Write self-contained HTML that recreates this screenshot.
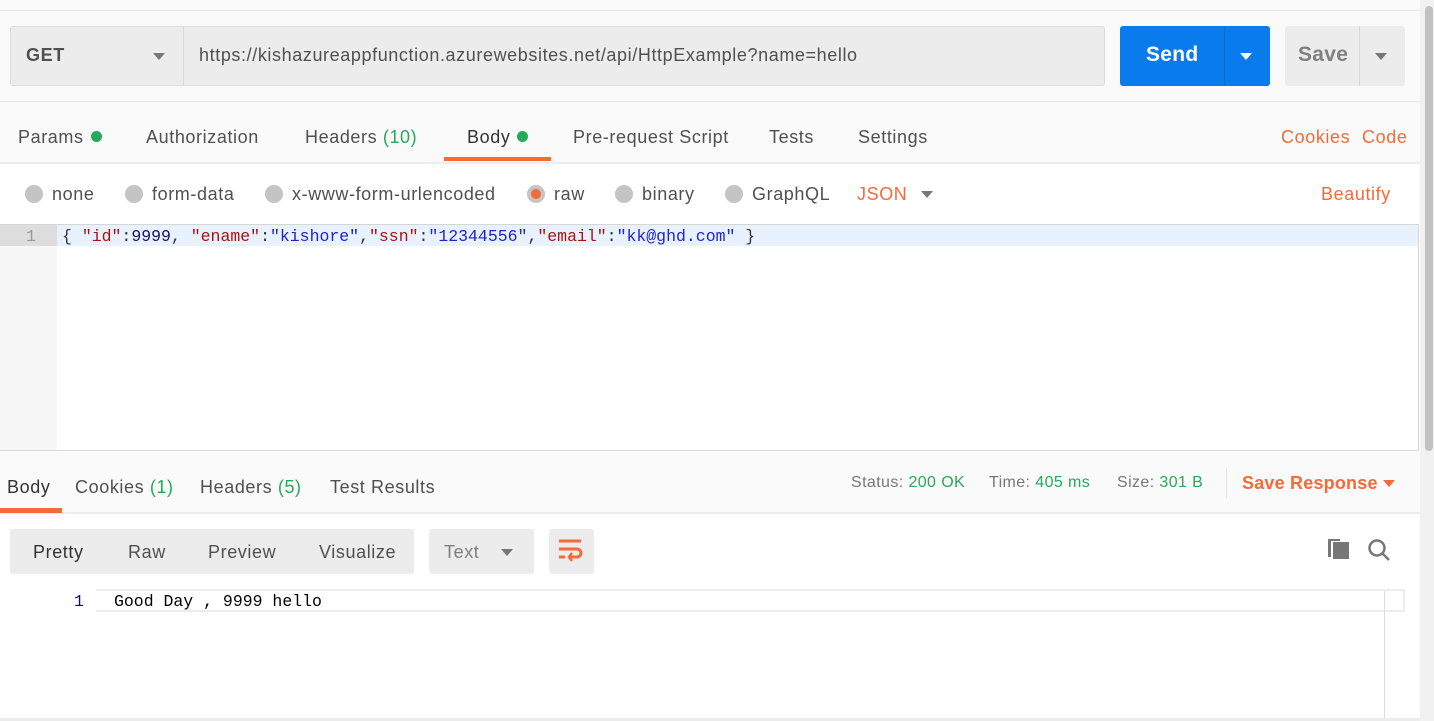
<!DOCTYPE html>
<html><head><meta charset="utf-8"><style>
*{margin:0;padding:0;box-sizing:border-box}
body{width:1434px;height:721px;overflow:hidden;background:#fff;font-family:"Liberation Sans",sans-serif;color:#505050;position:relative;font-size:18px;letter-spacing:0.6px}
.a{position:absolute;white-space:nowrap}
.g{color:#26a95b}
.o{color:#f26b3a}
.dot{display:inline-block;width:11px;height:11px;border-radius:50%;background:#26a95b;margin-left:7px;vertical-align:1px}
.rad{display:inline-block;width:18px;height:18px;border-radius:50%;background:#c4c4c4;vertical-align:-3px;margin-right:9px}
.mono{font-family:"Liberation Mono",monospace;font-size:16.5px;letter-spacing:0}
.tri{position:absolute;width:0;height:0;border-left:6px solid transparent;border-right:6px solid transparent;border-top:7px solid #777}
</style></head><body>
<div class="a" style="left:0;top:0;width:1420px;height:163px;background:#fafafa"></div>
<div class="a" style="left:0;top:10px;width:1420px;height:1px;background:#e8e8e8"></div>
<div class="a" style="left:0;top:101px;width:1420px;height:1px;background:#e8e8e8"></div>
<div class="a" style="left:0;top:162px;width:1420px;height:2px;background:#ececec"></div>
<div class="a" style="left:10px;top:26px;width:1095px;height:60px;background:#ececec;border:1px solid #dcdcdc;border-radius:3px"></div>
<div class="a" style="left:183px;top:27px;width:1px;height:58px;background:#d8d8d8"></div>
<div class="a" style="left:26px;top:45px;font-weight:bold;color:#505050">GET</div>
<div class="tri" style="left:153px;top:53px"></div>
<div class="a" style="left:199px;top:45px;color:#505050">https://kishazureappfunction.azurewebsites.net/api/HttpExample?name=hello</div>
<div class="a" style="left:1120px;top:26px;width:150px;height:60px;background:#097bed;border-radius:3px"></div>
<div class="a" style="left:1224px;top:26px;width:1px;height:60px;background:#0a6cd0"></div>
<div class="a" style="left:1146px;top:43px;color:#fff;font-weight:bold;font-size:21px;letter-spacing:0.3px">Send</div>
<div class="tri" style="left:1240px;top:53px;border-top-color:#fff"></div>
<div class="a" style="left:1285px;top:26px;width:120px;height:60px;background:#ececec;border-radius:3px"></div>
<div class="a" style="left:1359px;top:26px;width:1px;height:60px;background:#d8d8d8"></div>
<div class="a" style="left:1298px;top:43px;color:#808080;font-weight:bold;font-size:21px;letter-spacing:0.3px">Save</div>
<div class="tri" style="left:1375px;top:53px"></div>
<div class="a" style="left:18px;top:127px">Params<span class="dot"></span></div>
<div class="a" style="left:146px;top:127px">Authorization</div>
<div class="a" style="left:305px;top:127px">Headers <span class="g">(10)</span></div>
<div class="a" style="left:467px;top:127px;color:#333">Body<span class="dot"></span></div>
<div class="a" style="left:444px;top:157px;width:107px;height:4px;background:#f26b3a"></div>
<div class="a" style="left:573px;top:127px">Pre-request Script</div>
<div class="a" style="left:769px;top:127px">Tests</div>
<div class="a" style="left:858px;top:127px">Settings</div>
<div class="a o" style="left:1281px;top:127px">Cookies</div>
<div class="a o" style="left:1362px;top:127px">Code</div>
<div class="a" style="left:25px;top:184px"><span class="rad"></span>none</div>
<div class="a" style="left:125px;top:184px"><span class="rad"></span>form-data</div>
<div class="a" style="left:265px;top:184px"><span class="rad"></span>x-www-form-urlencoded</div>
<div class="a" style="left:527px;top:184px"><span class="rad" style="background:#f26b3a;border:4px solid #c4c4c4"></span>raw</div>
<div class="a" style="left:615px;top:184px"><span class="rad"></span>binary</div>
<div class="a" style="left:725px;top:184px"><span class="rad"></span>GraphQL</div>
<div class="a o" style="left:857px;top:184px">JSON</div>
<div class="tri" style="left:921px;top:191px"></div>
<div class="a o" style="left:1321px;top:184px">Beautify</div>
<div class="a" style="left:0;top:224px;width:1419px;height:227px;border:1px solid #d6d6d6;border-left:none;background:#fff"></div>
<div class="a" style="left:0;top:225px;width:57px;height:225px;background:#f7f7f7"></div>
<div class="a" style="left:0;top:225px;width:57px;height:21px;background:#ddd"></div>
<div class="a" style="left:57px;top:225px;width:1361px;height:21px;background:#e8f2fe"></div>
<div class="a mono" style="left:26px;top:227px;color:#999">1</div>
<div class="a mono" style="left:62px;top:227px;color:#333">{ <span style="color:#a11">"id"</span>:<span style="color:#116">9999</span>, <span style="color:#a11">"ename"</span>:<span style="color:#22c">"kishore"</span>,<span style="color:#a11">"ssn"</span>:<span style="color:#22c">"12344556"</span>,<span style="color:#a11">"email"</span>:<span style="color:#22c">"kk@ghd.com"</span> }</div>
<div class="a" style="left:0;top:452px;width:1420px;height:61px;background:#fafafa"></div>
<div class="a" style="left:0;top:512px;width:1420px;height:2px;background:#ececec"></div>
<div class="a" style="left:7px;top:477px;color:#333">Body</div>
<div class="a" style="left:0;top:508px;width:62px;height:5px;background:#f26b3a"></div>
<div class="a" style="left:75px;top:477px">Cookies <span class="g">(1)</span></div>
<div class="a" style="left:200px;top:477px">Headers <span class="g">(5)</span></div>
<div class="a" style="left:330px;top:477px">Test Results</div>
<div class="a" style="left:851px;top:474px;font-size:16px;color:#777;letter-spacing:0.4px">Status: <span class="g">200 OK</span></div>
<div class="a" style="left:989px;top:474px;font-size:16px;color:#777;letter-spacing:0.4px">Time: <span class="g">405 ms</span></div>
<div class="a" style="left:1117px;top:474px;font-size:16px;color:#777;letter-spacing:0.4px">Size: <span class="g">301 B</span></div>
<div class="a" style="left:1226px;top:468px;width:1px;height:30px;background:#e4e4e4"></div>
<div class="a o" style="left:1242px;top:473px;font-weight:bold;letter-spacing:0.2px">Save Response</div>
<div class="tri" style="left:1383px;top:480px;border-top-color:#f26b3a"></div>
<div class="a" style="left:10px;top:529px;width:404px;height:45px;background:#ececec;border-radius:3px"></div>
<div class="a" style="left:33px;top:542px;color:#333">Pretty</div>
<div class="a" style="left:128px;top:542px">Raw</div>
<div class="a" style="left:208px;top:542px">Preview</div>
<div class="a" style="left:319px;top:542px">Visualize</div>
<div class="a" style="left:429px;top:529px;width:105px;height:45px;background:#ececec;border-radius:3px"></div>
<div class="a" style="left:444px;top:542px;color:#808080">Text</div>
<div class="tri" style="left:501px;top:549px"></div>
<div class="a" style="left:549px;top:529px;width:45px;height:45px;background:#ececec;border-radius:3px"></div>
<svg class="a" style="left:557px;top:538px" width="28" height="28" viewBox="0 0 28 28" fill="none" stroke="#f26b3a" stroke-width="3"><path d="M2 3H24M2 11H20a4 4 0 0 1 0 8H13M2 19H8"/><path d="M15 15l-3 4 3 4" stroke-width="2.5"/></svg>
<svg class="a" style="left:1328px;top:538px" width="24" height="24" viewBox="0 0 24 24"><path d="M0 1h12v2H3v16H0z" fill="#777"/><rect x="5" y="4" width="16" height="17" fill="#777"/></svg>
<svg class="a" style="left:1366px;top:537px" width="26" height="26" viewBox="0 0 26 26" fill="none" stroke="#777" stroke-width="2.5"><circle cx="11" cy="11" r="7.5"/><path d="M16.5 16.5L23 23"/></svg>
<div class="a" style="left:96px;top:589px;width:1309px;height:23px;border:2px solid #ececec;border-left:none"></div>
<div class="a" style="left:1384px;top:591px;width:1px;height:130px;background:#ddd"></div>
<div class="a mono" style="left:74px;top:592px;color:#116">1</div>
<div class="a mono" style="left:114px;top:592px;color:#000">Good Day , 9999 hello</div>
<div class="a" style="left:0;top:718px;width:1420px;height:3px;background:#ececec"></div>
<div class="a" style="left:1420px;top:0;width:14px;height:721px;background:#f1f1f1"></div>
<div class="a" style="left:1425px;top:6px;width:8px;height:445px;background:#c1c1c1;border-radius:4px"></div>
</body></html>
